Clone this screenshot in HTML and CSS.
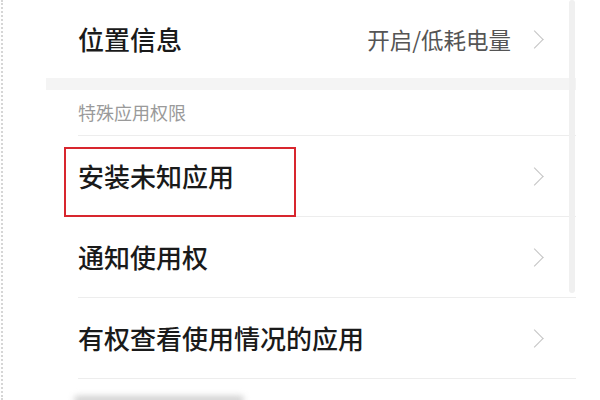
FILE: index.html
```html
<!DOCTYPE html>
<html lang="zh-CN">
<head>
    <meta charset="UTF-8">
    <meta name="viewport" content="width=device-width, initial-scale=1.0">
    <title>权限设置</title>
    <link rel="stylesheet" href="styles.css">
</head>
<body>

    <div class="page">
        <div class="panel">

            <!-- 位置信息 -->
            <div class="row row-first">
                <span class="label">位置信息</span>
                <span class="value">开启/低耗电量</span>
                <span class="arrow"></span>
            </div>

            <div class="band"></div>

            <div class="section-title">特殊应用权限</div>

            <div class="row">
                <span class="label">安装未知应用</span>
                <span class="arrow"></span>
                <div class="mark"></div>
            </div>
            <div class="row">
                <span class="label">通知使用权</span>
                <span class="arrow"></span>
            </div>
            <div class="row">
                <span class="label">有权查看使用情况的应用</span>
                <span class="arrow"></span>
            </div>

            <div class="scrollbar"></div>
            <div class="shade"></div>
        </div>
    </div>

</body>
</html>
```

FILE: styles.css
```css
html, body { margin: 0; padding: 0; background: #fff; }
body { font-family: "Noto Sans CJK SC", "Noto Sans", sans-serif; color: #1a1a1a; }
.page { width: 600px; height: 400px; overflow: hidden; border-left: 2px dotted #d6d6d6; margin-left: 1px; box-sizing: border-box; }
.panel { position: relative; margin-left: 43px; width: 530px; height: 400px; }
.row { position: relative; display: flex; align-items: center; height: 80px; margin-left: 32px; border-bottom: 1px solid #ededed; }
.row-first { height: 78px; border-bottom: none; }
.label { flex: 1; font-size: 26px; line-height: 1; font-weight: 500; }
.value { font-size: 22.5px; color: #555; margin-right: 17px; }
.arrow { width: 12px; height: 12px; border-top: 1.5px solid #c4c4c4; border-right: 1.5px solid #c4c4c4; transform: rotate(45deg); margin-right: 35px; }
.band { height: 12px; background: #f4f4f4; }
.section-title { margin-left: 32px; height: 45px; line-height: 45px; font-size: 18px; color: #9a9a9a; border-bottom: 1px solid #ededed; }
.mark { position: absolute; left: -14px; top: 11px; width: 228px; height: 66px; border: 2px solid #d8262e; }
.scrollbar { position: absolute; left: 523px; top: 0; width: 6px; height: 293px; background: #f0f0f0; border-radius: 3px; }
.shade { position: absolute; left: 28px; top: 396px; width: 170px; height: 8px; border-radius: 4px; background: #cfcfcf; filter: blur(3px); }
```
